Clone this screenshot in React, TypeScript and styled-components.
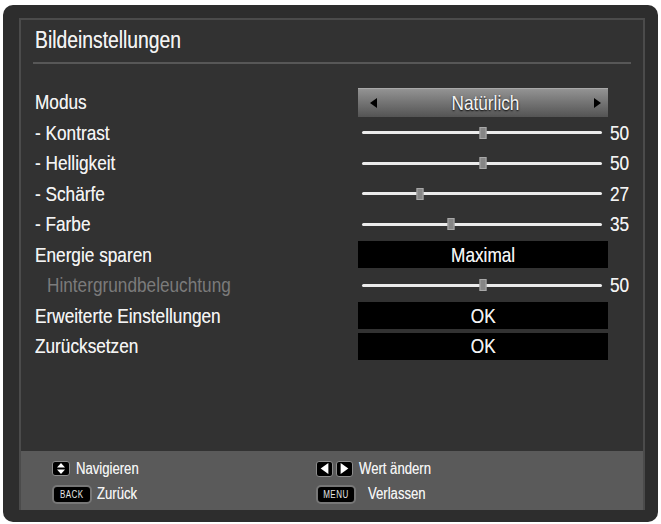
import React from "react";
import styled, { createGlobalStyle } from "styled-components";

const FONT = `"Liberation Sans", Arial, "DejaVu Sans", sans-serif`;

const GlobalStyle = createGlobalStyle`
  body { margin: 0; background: #ffffff; }
  * { box-sizing: border-box; }
`;

// the TV menu uses a condensed face; squeeze the text horizontally
const Narrow = styled.span<{ $origin?: string; $scale?: number }>`
  display: inline-block;
  white-space: nowrap;
  transform: scaleX(${(p) => p.$scale ?? 0.82});
  transform-origin: ${(p) => p.$origin ?? "left"} center;
`;

const Frame = styled.div`
  margin: 5px 0 0 3px;
  width: 655px;
  height: 517px;
  background: #2d2d2d;
  border-radius: 10px;
  padding: 13px 13px 12px 16px;
  font-family: ${FONT};
  color: #f3f3f3;
  text-shadow: 0 0 0.6px rgba(255, 255, 255, 0.6);
`;

const Panel = styled.div`
  height: 100%;
  display: flex;
  flex-direction: column;
  border: 2px solid #4b4b4b;
  border-bottom: 0;
  background: #323232;
`;

const Content = styled.div`
  flex: 1;
  padding: 8px 12px 0 12px;
`;

const Title = styled.div`
  font-size: 23px;
  line-height: 24px;
  margin: 0 0 10px 2px;
`;

const Divider = styled.div`
  height: 2px;
  background: #575757;
`;

const Rows = styled.div`
  margin-top: 22.75px;
  display: grid;
  grid-auto-rows: 30.5px;
`;

const Row = styled.div`
  display: grid;
  grid-template-columns: 325px 250px 1fr;
  align-items: center;
`;

const Label = styled.div<{ $indent?: number; $dim?: boolean }>`
  font-size: 21px;
  padding-left: ${(p) => 2 + (p.$indent || 0)}px;
  color: ${(p) => (p.$dim ? "#7b7b7b" : "#f3f3f3")};
  text-shadow: ${(p) => (p.$dim ? "none" : "inherit")};
  white-space: nowrap;
`;

const SelectBox = styled.div`
  height: 29px;
  display: flex;
  align-items: center;
  justify-content: space-between;
  padding: 0 7px 0 12px;
  background: linear-gradient(#939393, #767676 45%, #545454);
  border-top: 1px solid #a9a9a9;
  font-size: 21px;
  text-shadow: 0 1px 2px #000;
`;

const ValueBox = styled.div`
  height: 27px;
  background: #000;
  display: flex;
  align-items: center;
  justify-content: center;
  font-size: 21px;
`;

const Track = styled.div`
  position: relative;
  height: 3px;
  margin: 0 6px 0 4px;
  background: #ebebeb;
  border-radius: 2px;
`;

const Thumb = styled.div`
  position: absolute;
  top: 50%;
  width: 7px;
  height: 12px;
  transform: translate(-50%, -50%);
  background: #868686;
  border: 1px solid #a8a8a8;
`;

const Num = styled.div`
  font-size: 21px;
  padding-left: 2px;
`;

const Footer = styled.div`
  height: 59px;
  background: #5a5a5a;
  display: grid;
  grid-template-columns: 264px 1fr;
  grid-auto-rows: 25.5px;
  align-items: center;
  padding: 5px 0 0 31px;
  font-size: 16px;
`;

const Hint = styled.div<{ $gap?: number }>`
  display: flex;
  align-items: center;
  gap: ${(p) => p.$gap ?? 6}px;
  white-space: nowrap;
`;

const Keys = styled.div`
  display: flex;
  gap: 3px;
`;

const IconKey = styled.span<{ $w: number; $h: number }>`
  width: ${(p) => p.$w}px;
  height: ${(p) => p.$h}px;
  background: #000;
  border: 1.5px solid #8c8c8c;
  border-radius: 3px;
  display: flex;
  align-items: center;
  justify-content: center;
`;

const TextKey = styled.span`
  width: 40px;
  height: 19px;
  background: #000;
  border: 2px solid #777;
  border-radius: 5px;
  display: flex;
  align-items: center;
  justify-content: center;
  font-size: 10px;
  letter-spacing: 0.6px;
  color: #e6e6e6;
  text-shadow: none;
`;

const Arrow = ({ dir, color = "#000", w = 7, h = 10 }: { dir: "l" | "r"; color?: string; w?: number; h?: number }) => (
  <svg width={w} height={h} viewBox="0 0 7 10">
    {dir === "l" ? <polygon points="7,0 7,10 0,5" fill={color} /> : <polygon points="0,0 0,10 7,5" fill={color} />}
  </svg>
);

type Item =
  | { label: string; kind: "select"; value: string }
  | { label: string; kind: "slider"; value: number; pos: number; dim?: boolean; indent?: number }
  | { label: string; kind: "box"; value: string };

const items: Item[] = [
  { label: "Modus", kind: "select", value: "Natürlich" },
  { label: "- Kontrast", kind: "slider", value: 50, pos: 0.506 },
  { label: "- Helligkeit", kind: "slider", value: 50, pos: 0.506 },
  { label: "- Schärfe", kind: "slider", value: 27, pos: 0.241 },
  { label: "- Farbe", kind: "slider", value: 35, pos: 0.369 },
  { label: "Energie sparen", kind: "box", value: "Maximal" },
  { label: "Hintergrundbeleuchtung", kind: "slider", value: 50, pos: 0.506, dim: true, indent: 12 },
  { label: "Erweiterte Einstellungen", kind: "box", value: "OK" },
  { label: "Zurücksetzen", kind: "box", value: "OK" },
];

const SettingRow = ({ item }: { item: Item }) => {
  if (item.kind === "select") {
    return (
      <Row>
        <Label>
          <Narrow>{item.label}</Narrow>
        </Label>
        <SelectBox>
          <Arrow dir="l" />
          <Narrow $origin="center">{item.value}</Narrow>
          <Arrow dir="r" />
        </SelectBox>
      </Row>
    );
  }
  if (item.kind === "box") {
    return (
      <Row>
        <Label>
          <Narrow>{item.label}</Narrow>
        </Label>
        <ValueBox>
          <Narrow $origin="center">{item.value}</Narrow>
        </ValueBox>
      </Row>
    );
  }
  return (
    <Row>
      <Label $dim={item.dim} $indent={item.indent}>
        <Narrow>{item.label}</Narrow>
      </Label>
      <Track>
        <Thumb style={{ left: `${item.pos * 100}%` }} />
      </Track>
      <Num>
        <Narrow>{item.value}</Narrow>
      </Num>
    </Row>
  );
};

export default function App() {
  return (
    <>
      <GlobalStyle />
      <Frame>
        <Panel>
          <Content>
            <Title>
              <Narrow $scale={0.84}>Bildeinstellungen</Narrow>
            </Title>
            <Divider />
            <Rows>
              {items.map((it, i) => (
                <SettingRow key={i} item={it} />
              ))}
            </Rows>
          </Content>
          <Footer>
            <Hint>
              <IconKey $w={18} $h={15}>
                <svg width="8" height="11" viewBox="0 0 8 11">
                  <polygon points="4,0 8,4.5 0,4.5" fill="#fff" />
                  <polygon points="0,6.5 8,6.5 4,11" fill="#fff" />
                </svg>
              </IconKey>
              <Narrow>Navigieren</Narrow>
            </Hint>
            <Hint>
              <Keys>
                <IconKey $w={17} $h={16}>
                  <Arrow dir="l" color="#fff" w={9} h={11} />
                </IconKey>
                <IconKey $w={17} $h={16}>
                  <Arrow dir="r" color="#fff" w={9} h={11} />
                </IconKey>
              </Keys>
              <Narrow>Wert ändern</Narrow>
            </Hint>
            <Hint $gap={5}>
              <TextKey>
                <Narrow $origin="center" $scale={0.8}>BACK</Narrow>
              </TextKey>
              <Narrow>Zurück</Narrow>
            </Hint>
            <Hint $gap={12}>
              <TextKey>
                <Narrow $origin="center" $scale={0.8}>MENU</Narrow>
              </TextKey>
              <Narrow>Verlassen</Narrow>
            </Hint>
          </Footer>
        </Panel>
      </Frame>
    </>
  );
}
